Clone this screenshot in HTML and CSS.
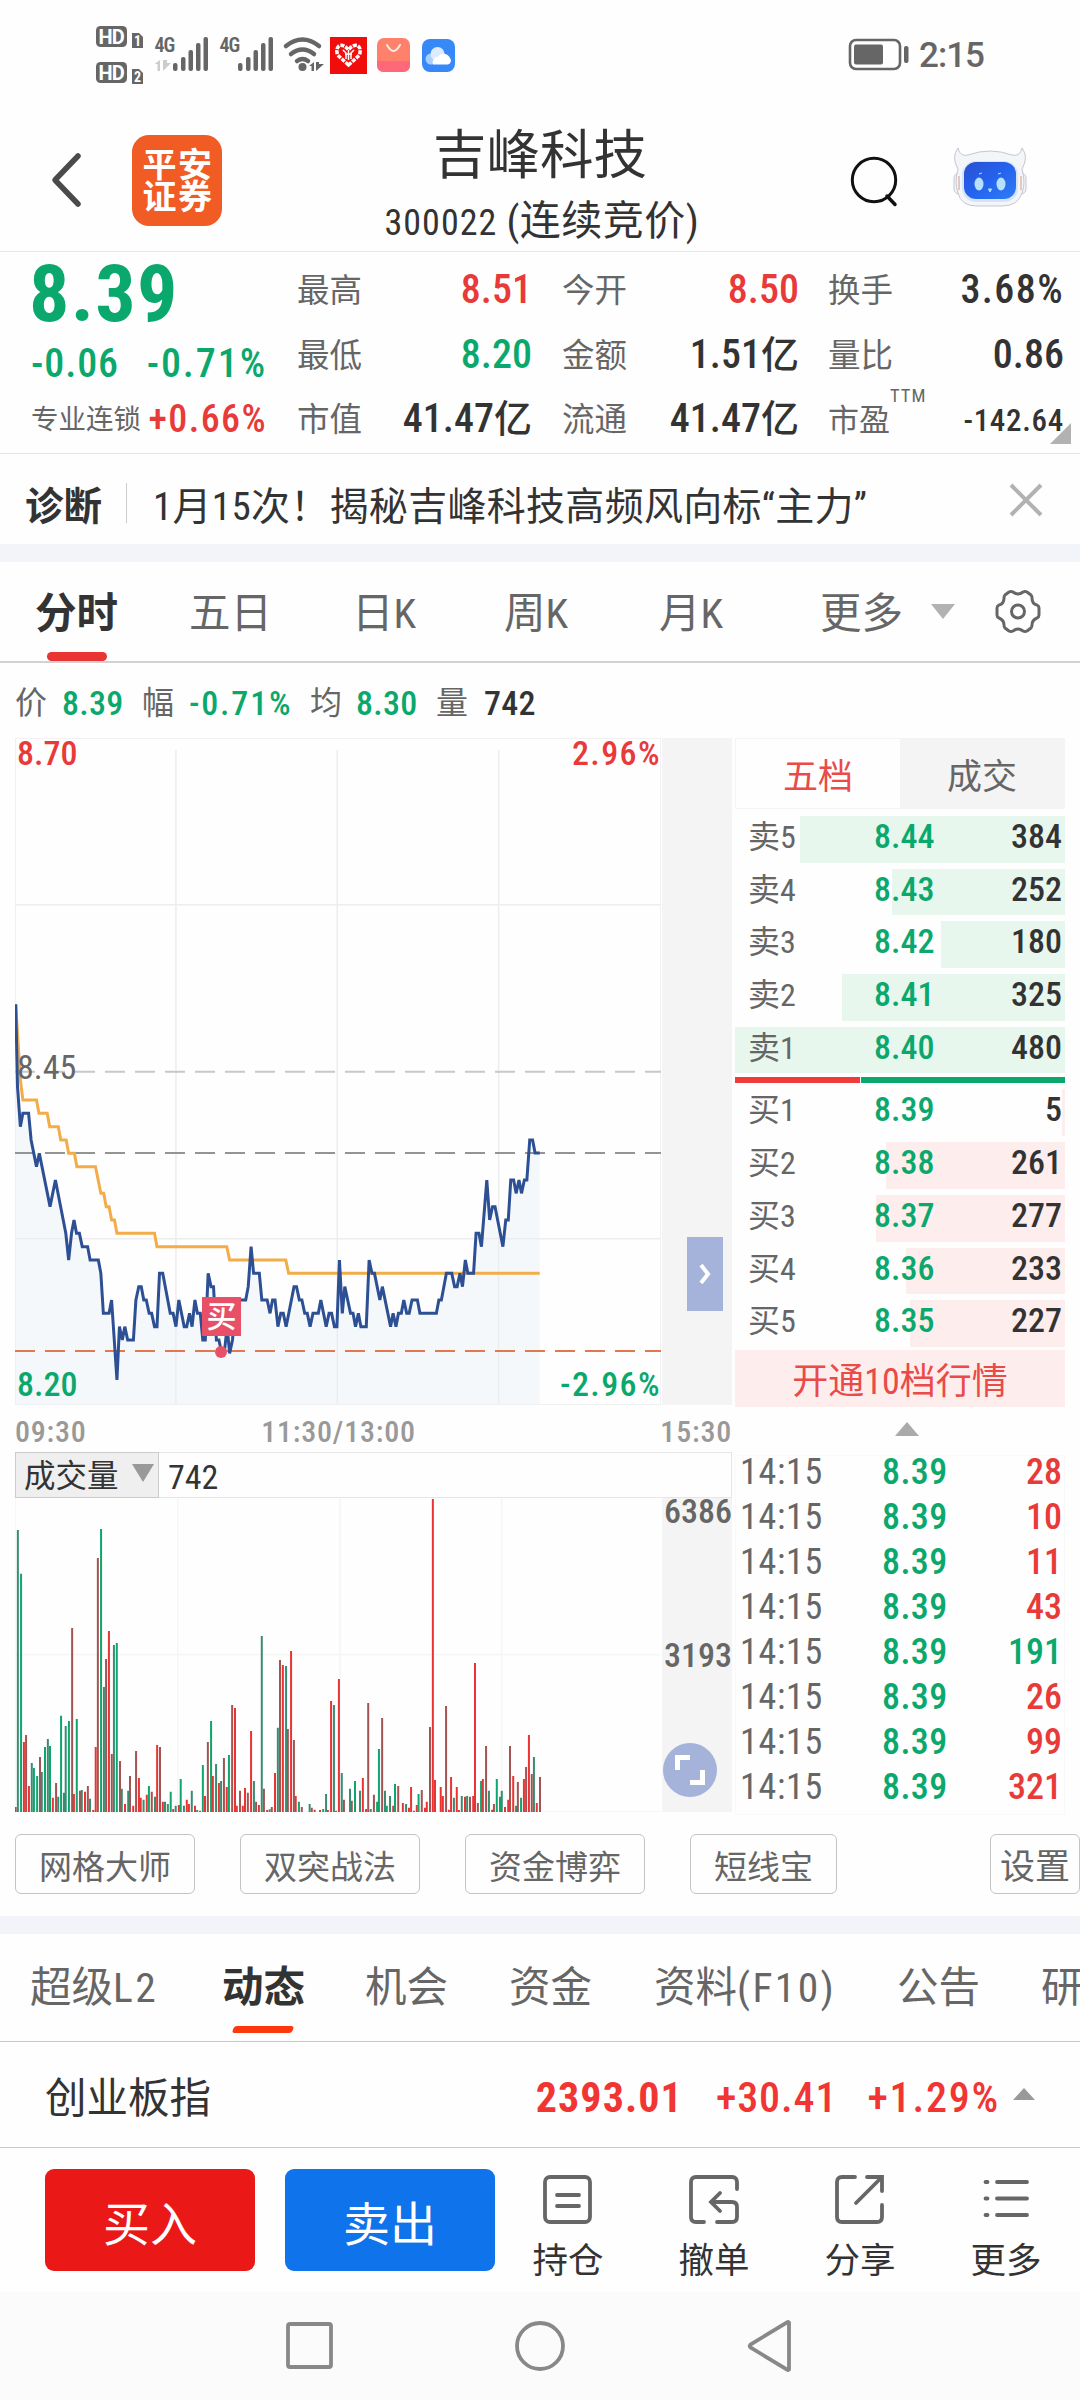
FILE: index.html
```html
<!DOCTYPE html>
<html lang="zh-CN">
<head>
    <meta charset="UTF-8">
    <meta name="viewport" content="width=device-width, initial-scale=1.0">
    <title>吉峰科技 300022</title>
    <link rel="stylesheet" href="styles.css">
</head>
<body>

<!-- 状态栏 -->
<div class="status-bar">
    <svg class="status-icons" width="362" height="64" viewBox="95 24 362 64">
        <g fill="#666">
            <rect x="96" y="26" width="31" height="21" rx="4.5"/>
            <rect x="96" y="62" width="31" height="21" rx="4.5"/>
            <path d="M132 33h7l4 4v11h-11z"/>
            <path d="M132 69h7l4 4v11h-11z"/>
            <rect x="173" y="63" width="4.5" height="8" rx="2"/>
            <rect x="181" y="57" width="4.5" height="14" rx="2"/>
            <rect x="188.5" y="50" width="4.5" height="21" rx="2"/>
            <rect x="196" y="43" width="4.5" height="28" rx="2"/>
            <rect x="203.5" y="37" width="4.5" height="34" rx="2"/>
            <rect x="238" y="63" width="4.5" height="8" rx="2"/>
            <rect x="246" y="57" width="4.5" height="14" rx="2"/>
            <rect x="253.5" y="50" width="4.5" height="21" rx="2"/>
            <rect x="261" y="43" width="4.5" height="28" rx="2"/>
            <rect x="268.5" y="37" width="4.5" height="34" rx="2"/>
            <circle cx="302.5" cy="67" r="4"/>
            <path d="M314 62v9h-2.500v-5h-2.500zM316 62v9l8-7h-5v-2z"/>
        </g>
        <path d="M160 60v11h-2.500v-7h-3zM163 60v11l8-8h-4v-3z" fill="#ccc"/>
        <g fill="none" stroke="#666" stroke-width="4.5" stroke-linecap="round">
            <path d="M286 46q16.500-13 33 0"/>
            <path d="M291 54q11.500-9 23 0"/>
            <path d="M297 61q5.500-4 11 0"/>
        </g>
        <text class="hd" x="98.5" y="43.5">HD</text>
        <text class="hd" x="98.5" y="79.5">HD</text>
        <text class="sim" x="134" y="46">1</text>
        <text class="sim" x="134" y="82">2</text>
        <text class="net" x="154.5" y="52">4G</text>
        <text class="net" x="219.5" y="52">4G</text>
        <rect x="330" y="37" width="37" height="37" fill="#f20d0d"/>
        <path d="M348.500 65l-11-10q-2-7 2-9.500 5-1 9 4.500 4-5.500 9-4.500 4 2.500 2 9.500z" fill="#f20d0d" stroke="#fff" stroke-width="3.5" stroke-dasharray="4 1.200"/>
        <path d="M343 50l3 3v6M354 50l-3 3v6M348.500 50v10M345 54h7" fill="none" stroke="#fff" stroke-width="1.5"/>
        <rect x="377" y="38" width="33" height="34" rx="7" fill="#ff816c"/>
        <path d="M377 61h33v4q0 7-7 7h-19q-7 0-7-7z" fill="#ff6878"/>
        <path d="M387 45q6.500 12 13 0" fill="none" stroke="#ffe9df" stroke-width="2" stroke-linecap="round"/>
        <rect x="422" y="39" width="33" height="33" rx="8" fill="#3889f8"/>
        <circle cx="431" cy="59" r="5.5" fill="#a9cfff"/>
        <circle cx="437.5" cy="54" r="7" fill="#dcebff"/>
        <path d="M433 64.500a6 6 0 0 1 5-8 7 7 0 0 1 12 1.500 4 4 0 0 1-2 6.500z" fill="#fff"/>
    </svg>
    <div class="status-right">
        <svg width="62" height="34" viewBox="0 0 62 34">
            <rect x="2" y="2" width="50" height="29" rx="6" fill="none" stroke="#666" stroke-width="2.6"/>
            <rect x="6" y="6.5" width="29" height="20" rx="2" fill="#666"/>
            <rect x="56" y="8" width="4.5" height="17" rx="2" fill="#666"/>
        </svg>
        <span class="clock">2:15</span>
    </div>
</div>

<!-- 标题 -->
<header class="header">
    <svg class="back" width="32" height="56" viewBox="0 0 32 56"><path d="M27 4L4 28l23 24" fill="none" stroke="#4a4a4a" stroke-width="5.5" stroke-linecap="round" stroke-linejoin="round"/></svg>
    <div class="brand"><span>平安</span><span>证券</span></div>
    <div class="name">
        <h1>吉峰科技</h1>
        <p>300022 <span>(连续竞价)</span></p>
    </div>
    <svg class="search" width="50" height="54" viewBox="0 0 50 54"><circle cx="24" cy="25" r="21.7" fill="none" stroke="#111" stroke-width="3"/><path d="M37 41l8 8.500" stroke="#111" stroke-width="3.5" stroke-linecap="round"/></svg>
    <svg class="robot" width="76" height="62" viewBox="0 0 76 62">
        <defs>
            <linearGradient id="face" x1="0" y1="0" x2="1" y2="1">
                <stop offset="0" stop-color="#2a4fd0"/><stop offset=".5" stop-color="#2463ee"/><stop offset="1" stop-color="#2f7df5"/>
            </linearGradient>
        </defs>
        <g fill="#f3f5f8" stroke="#c3c8cf" stroke-width="1">
            <rect x="2" y="27" width="12" height="21" rx="5"/>
            <rect x="62" y="27" width="12" height="21" rx="5"/>
            <path d="M6 2q2 9 10 7 22-8 44 0 8 2 10-7 7 9 0 21 4 14 0 24-4 13-20 13H25Q9 60 6 47q-4-10 0-24Q-1 11 6 2z"/>
        </g>
        <path d="M7 30v14M69 30v14" stroke="#e3b5ad" stroke-width="1.5"/>
        <rect x="10" y="15" width="56" height="41" rx="14" fill="#d5e4fa"/>
        <rect x="12" y="16" width="52" height="37" rx="12" fill="url(#face)"/>
        <ellipse cx="27" cy="38" rx="4.5" ry="6.5" fill="#b7e0fb"/>
        <ellipse cx="49" cy="38" rx="4.5" ry="6.5" fill="#b7e0fb"/>
        <path d="M27 28l3-1M46 28l3-1M36.500 43h3l-1.500 3z" stroke="#b7e0fb" stroke-width="1" fill="#b7e0fb"/>
    </svg>
</header>

<!-- 行情 -->
<section class="quote">
    <div class="quote-main">
        <div class="price green">8.39</div>
        <div class="change green"><span>-0.06</span><span class="pct">-0.71%</span></div>
        <div class="sector"><span>专业连锁</span><b class="red pct">+0.66%</b></div>
    </div>
    <dl class="stats">
        <dt>最高</dt><dd class="red">8.51</dd>
        <dt>今开</dt><dd class="red">8.50</dd>
        <dt>换手</dt><dd class="pct">3.68%</dd>
        <dt>最低</dt><dd class="green">8.20</dd>
        <dt>金额</dt><dd>1.51<i>亿</i></dd>
        <dt>量比</dt><dd>0.86</dd>
        <dt>市值</dt><dd>41.47<i>亿</i></dd>
        <dt>流通</dt><dd>41.47<i>亿</i></dd>
        <dt class="pe">市盈<sup>TTM</sup></dt><dd class="small">-142.64</dd>
    </dl>
    <div class="corner"></div>
</section>

<!-- 诊断 -->
<section class="diagnose">
    <strong>诊断</strong>
    <span class="divider"></span>
    <p>1月15次！揭秘吉峰科技高频风向标“主力”</p>
    <svg width="34" height="34" viewBox="0 0 34 34"><path d="M2 2l30 30M32 2L2 32" stroke="#b2b2b2" stroke-width="4"/></svg>
</section>

<!-- 周期 -->
<nav class="period-tabs">
    <span class="active">分时</span>
    <span>五日</span>
    <span>日K</span>
    <span>周K</span>
    <span>月K</span>
    <span>更多</span>
    <i class="tri-down"></i>
    <svg width="46" height="46" viewBox="0 0 46 46" fill="none" stroke="#666" stroke-width="3" stroke-linejoin="round">
        <path d="M18 3q5 4 10 0 2-1 4 0l4 3q1 1 1 3 0 6 5 7 2 1 2 3v7q0 2-2 3-5 2-5 7 0 2-1 3l-4 3q-2 1-4 0-5-4-10 0-2 1-4 0l-4-3q-1-1-1-3 0-5-5-7-2-1-2-3v-7q0-2 2-3 5-1 5-7 0-2 1-3l4-3q2-1 4 0z"/>
        <circle cx="23" cy="22.5" r="6.5"/>
    </svg>
</nav>

<div class="legend">
    <span>价</span><b class="green">8.39</b>
    <span>幅</span><b class="green pct">-0.71%</b>
    <span>均</span><b class="green">8.30</b>
    <span>量</span><b>742</b>
</div>

<main class="market">
    <div class="left">
        <!-- 分时图 -->
        <div class="chart">
            <svg width="646" height="667" viewBox="42 -726 1806 2001" preserveAspectRatio="none">
                <path class="area" d="M44 73 57 440 64 400H80L87 480 102 560 110 520 140 680 155 600 184 760 192 840 207 720 230 800 252 840H275L289 1000H305L327 1200 334 1040 357 1080H373L380 960 388 920H395L439 1040 446 880H455L476 1000 492 1040 500 960 515 1040 545 960 567 1080H574L582 880 597 920 605 1080 620 1120 642 1120 660 960H687L702 800 709 880H725L732 960 777 1040 800 1040 822 920 867 1040 897 960 912 1040 942 1040 949 840 957 1000 964 920 987 1000 1024 1040 1032 840 1047 880 1062 960 1069 920 1092 1040 1129 960 1152 960H1167L1174 1000H1220L1248 880H1263L1293 920 1301 840 1324 880 1331 760 1346 800 1361 600 1369 720 1377 680H1384L1406 800 1421 720 1428 600 1443 640 1473 600 1481 480H1489L1496 519H1509V1275H42z"/>
                <path class="grid" d="M42-726H1848V1275H42zM492-690V1275M943-690V1275M1394-690V1275M42-226H1848M42 776H1848"/>
                <path class="dash base" d="M42 275H1848"/>
                <path class="dash last" d="M42 519H1848"/>
                <path class="dash cost" d="M42 1113H1848"/>
                <path class="average" d="M44 73 57 300 64 360H102L109 400H132L139 440H163L170 480H185L192 520H208L215 560H267L282 640H290L297 680H305L312 720H320L327 760H432L439 800H634L642 840H799L807 880H1509"/>
                <path class="line" d="M44 73 49 320 57 440 64 400H80L87 480 102 560 110 520 140 680 155 600 184 760 192 840 200 760 207 720 214 760H222L230 800H245L252 840H275L282 880 289 1000H305L312 960 327 1200 334 1040 342 1080 349 1040 357 1080H373L380 960 388 920H395L402 960H409L417 1000H424L432 1040H439L446 880H455L476 1000H484L492 1040 500 960 515 1040H522L530 1000 537 1040 545 960 552 1000H560L567 1080H574L582 880 590 920H597L605 1080H612L620 1120H627L635 1040 642 1120 650 1080 660 960H687L694 920 702 800 709 880H725L732 960H747L755 1000 762 960H769L777 1040 785 1000H792L800 1040 822 920H829L837 960H844L852 1000H859L867 1040 875 1000H890L897 960 912 1040 920 1000H927L935 1040H942L949 840 957 1000 964 920 980 1000H987L994 1040 1002 1000 1009 1040H1024L1032 840 1040 880H1047L1062 960 1069 920 1092 1040 1099 1000 1107 1040 1114 1000H1122L1129 960 1137 1000H1144L1152 960H1167L1174 1000H1220L1227 960H1234L1248 880H1263L1271 920H1278L1286 880 1293 920 1301 840 1308 880H1324L1331 760H1339L1346 800 1361 600 1369 720 1377 680H1384L1406 800 1414 720H1421L1428 600H1436L1443 640 1451 600 1458 640 1466 600H1473L1481 480H1489L1496 519H1509"/>
            </svg>
            <div class="side"></div>
            <span class="label top-left red">8.70</span>
            <span class="label top-right red pct">2.96%</span>
            <span class="label middle">8.45</span>
            <span class="label bottom-left green">8.20</span>
            <span class="label bottom-right green pct">-2.96%</span>
            <span class="buy-dot"></span>
            <span class="buy-mark">买</span>
            <span class="handle"><svg width="14" height="20" viewBox="0 0 14 20"><path d="M3 1l7 9-7 9" fill="none" stroke="#fff" stroke-width="4"/></svg></span>
        </div>
        <div class="times"><span>09:30</span><span>11:30/13:00</span><span>15:30</span></div>

        <!-- 成交量 -->
        <div class="volume-head">
            <div class="volume-select">成交量<i class="tri-down"></i></div>
            <span>742</span>
        </div>
        <div class="volume">
            <svg width="645" height="314" viewBox="42 294 1806 942" preserveAspectRatio="none">
                <path class="grid" d="M42 294V1236H1848M498 294V1236M952 294V1236M1405 294V1236M42 764H1848"/>
                <path class="bar up" d="M67 1026V1236M81 1158V1236M148 1193V1236M207 1182V1236M238 1175V1236M261 1230V1236M268 1041V1236M305 693V1236M350 1212V1236M373 1217V1236M389 1134V1236M394 1193V1236M411 1184V1236M440 1035V1236M456 1205V1236M485 1227V1236M501 1215V1236M523 1199V1236M529 1212V1236M546 1217V1236M560 1232V1236M574 1188V1236M596 1128V1236M613 1149V1236M635 1161V1236M658 924V1236M663 1217V1236M680 1217V1236M686 1164V1236M703 993V1236M725 1215V1236M748 1230V1236M770 1119V1236M792 795V1236M815 753V1236M828 1188V1236M881 1229V1236M896 1230V1236M918 1230V1236M927 903V1236M941 1232V1236M949 837V1236M1016 1134V1236M1025 1227V1236M1101 1217V1236M1128 1209V1236M1145 1223V1236M1151 1161V1236M1159 1232V1236M1167 1215V1236M1190 1223V1236M1195 1205V1236M1212 297V1236M1218 1140V1236M1234 1161V1236M1240 1188V1236M1257 1229V1236M1263 1131V1236M1279 1161V1236M1285 1230V1236M1302 1190V1236M1325 1188V1236M1330 789V1236M1352 1137V1236M1378 1229V1236M1414 1221V1236M1423 1199V1236M1437 1128V1236M1467 1137V1236M1481 1005V1236M1503 1209V1236"/>
                <path class="bar up dim" d="M44 1221V1236M73 1005V1236M112 1071V1236M157 1149V1236M202 684V1236M224 1172V1236M246 1158V1236M274 474V1236M297 777V1236M313 1062V1236M336 1083V1236M364 1128V1236M381 1053V1236M425 1175V1236M448 1041V1236M582 1026V1236M627 1074V1236M650 915V1236M672 1172V1236M694 1178V1236M717 1205V1236M739 1166V1236M761 1221V1236M784 780V1236M806 987V1236M823 1020V1236M845 1221V1236M873 1223V1236M963 1199V1236M985 1202V1236M1031 909V1236M1047 1184V1236M1070 954V1236M1115 1158V1236M1181 1170V1236M1204 981V1236M1249 918V1236M1316 1190V1236M1338 1209V1236M1361 1038V1236M1383 1212V1236M1428 1038V1236M1450 1146V1236M1473 1101V1236M1489 1122V1236M1512 1131V1236"/>
                <path class="bar down" d="M59 521V1236M95 1104V1236M104 1128V1236M126 1041V1236M140 1038V1236M171 947V1236M193 963V1236M215 957V1236M283 387V1236M327 729V1236M417 1158V1236M478 1175V1236M506 1137V1236M568 1095V1236M591 963V1236M641 1065V1236M837 1205V1236M905 1227V1236M994 1143V1236M1056 1205V1236M1061 1047V1236M1083 1217V1236M1106 1152V1236M1172 1182V1236M1347 1143V1236M1391 1137V1236M1400 1190V1236M1459 1193V1236"/>
                <path class="bar down dim" d="M50 390V1236M89 1089V1236M117 1116V1236M134 1017V1236M163 1190V1236M179 1178V1236M184 978V1236M229 1170V1236M252 1196V1236M291 861V1236M319 735V1236M341 1166V1236M359 1172V1236M402 1199V1236M434 1190V1236M462 1205V1236M470 1212V1236M492 1217V1236M515 1217V1236M537 1172V1236M552 1230V1236M605 1092V1236M619 1143V1236M711 1143V1236M733 708V1236M755 1228V1236M778 983V1236M801 798V1236M867 1212V1236M913 1182V1236M935 915V1236M957 1119V1236M980 1166V1236M1008 1172V1236M1038 1227V1236M1078 1172V1236M1092 1188V1236M1137 1212V1236M1271 1193V1236M1293 1188V1236M1308 1188V1236M1369 1172V1236M1405 1172V1236M1445 1217V1236M1495 1071V1236"/>
            </svg>
            <div class="side"></div>
            <span class="label vol-top">6386</span>
            <span class="label vol-mid">3193</span>
            <span class="expand"><svg width="30" height="30" viewBox="0 0 30 30"><path d="M15 2.500H2.500V15M15 27.500H27.500V15" fill="none" stroke="#fff" stroke-width="5"/></svg></span>
        </div>
    </div>

    <!-- 盘口 -->
    <aside class="right">
        <div class="book-tabs"><span class="active">五档</span><span>成交</span></div>
        <div class="book ask">
            <div class="row"><i style="width:265px"></i><span>卖5</span><b>8.44</b><em>384</em></div>
            <div class="row"><i style="width:173px"></i><span>卖4</span><b>8.43</b><em>252</em></div>
            <div class="row"><i style="width:124px"></i><span>卖3</span><b>8.42</b><em>180</em></div>
            <div class="row"><i style="width:223px"></i><span>卖2</span><b>8.41</b><em>325</em></div>
            <div class="row"><i style="width:330px"></i><span>卖1</span><b>8.40</b><em>480</em></div>
        </div>
        <div class="ratio"><i></i><i></i></div>
        <div class="book bid">
            <div class="row"><i style="width:3px"></i><span>买1</span><b>8.39</b><em>5</em></div>
            <div class="row"><i style="width:179px"></i><span>买2</span><b>8.38</b><em>261</em></div>
            <div class="row"><i style="width:189px"></i><span>买3</span><b>8.37</b><em>277</em></div>
            <div class="row"><i style="width:159px"></i><span>买4</span><b>8.36</b><em>233</em></div>
            <div class="row"><i style="width:155px"></i><span>买5</span><b>8.35</b><em>227</em></div>
        </div>
        <div class="open-level">开通10档行情</div>
        <div class="fold"><i class="tri-up"></i></div>
        <div class="ticks">
            <div><span>14:15</span><b>8.39</b><em class="red">28</em></div>
            <div><span>14:15</span><b>8.39</b><em class="red">10</em></div>
            <div><span>14:15</span><b>8.39</b><em class="red">11</em></div>
            <div><span>14:15</span><b>8.39</b><em class="red">43</em></div>
            <div><span>14:15</span><b>8.39</b><em class="green">191</em></div>
            <div><span>14:15</span><b>8.39</b><em class="red">26</em></div>
            <div><span>14:15</span><b>8.39</b><em class="red">99</em></div>
            <div><span>14:15</span><b>8.39</b><em class="red">321</em></div>
        </div>
    </aside>
</main>

<div class="tools">
    <span>网格大师</span>
    <span>双突战法</span>
    <span>资金博弈</span>
    <span class="short">短线宝</span>
    <span class="setting">设置</span>
</div>

<nav class="info-tabs">
    <span>超级<i>L2</i></span>
    <span class="active">动态</span>
    <span>机会</span>
    <span>资金</span>
    <span>资料<i>(F10)</i></span>
    <span>公告</span>
    <span>研</span>
</nav>

<div class="index-row">
    <span class="index-name">创业板指</span>
    <b>2393.01</b>
    <span class="diff">+30.41</span>
    <span class="pct">+1.29%</span>
    <i class="tri-up"></i>
</div>

<!-- 底部操作 -->
<footer class="actions">
    <div class="btn buy">买入</div>
    <div class="btn sell">卖出</div>
    <div class="action">
        <svg viewBox="0 0 50 50"><rect x="2" y="2" width="45" height="45" rx="5"/><path d="M14 20h22M14 31h22" stroke-linecap="round"/></svg>
        <span>持仓</span>
    </div>
    <div class="action">
        <svg viewBox="0 0 50 50" stroke-linecap="round"><path d="M48 14V7q0-5-5-5H7Q2 2 2 7v35q0 5 5 5h8M28 47h15q5 0 5-5V32q0-5-5-5H23M31 18l-9 9 9 9"/></svg>
        <span>撤单</span>
    </div>
    <div class="action">
        <svg viewBox="0 0 50 50" stroke-linecap="round"><path d="M20 2H7Q2 2 2 7v35q0 5 5 5h35q5 0 5-5V30M32 2h15v14M46 3L21 28"/></svg>
        <span>分享</span>
    </div>
    <div class="action">
        <svg viewBox="0 0 50 50" stroke-linecap="round"><path d="M4.500 7h2M16 7h30M4.500 23.500h2M16 23.500h30M4.500 40h2M16 40h30"/></svg>
        <span>更多</span>
    </div>
</footer>

<div class="system-nav">
    <svg viewBox="0 0 56 56"><rect x="6" y="6" width="43" height="43" rx="2"/></svg>
    <svg viewBox="0 0 56 56"><circle cx="28" cy="28" r="23"/></svg>
    <svg viewBox="0 0 56 56"><path d="M47 4.500v47q-1 1-2 0L8.500 29.500q-1.500-1.500 0-3L45 4.500q1-1 2 0z"/></svg>
</div>

</body>
</html>
```
FILE: styles.css
```css
* {
    box-sizing: border-box;
    margin: 0;
    padding: 0;
}
body {
    width: 1080px;
    height: 2400px;
    overflow: hidden;
    background-color: #fefefe;
    color: #333;
    font-family: Roboto, "Noto Sans CJK SC", sans-serif;
    font-stretch: condensed;
    line-height: 1;
    white-space: nowrap;
}
svg {
    display: block;
    flex: none;
}
i, em {
    font-style: normal;
}
b {
    font-weight: 500;
}
.red {
    color: #e83a38;
}
.green {
    color: #0aa86c;
}
.pct {
    letter-spacing: 1.4px;
}

/* 三角 */
.tri-down {
    border: 12px solid transparent;
    border-top: 15px solid #b2b2b2;
    border-bottom: 0;
}
.tri-up {
    border: 12px solid transparent;
    border-bottom: 14px solid #aaa;
    border-top: 0;
}

/* 状态栏 */
.status-bar {
    display: flex;
    justify-content: space-between;
    height: 108px;
    padding: 24px 96px 0 95px;
}
.status-icons {
    overflow: visible;
}
.hd {
    font-size: 20px;
    font-weight: 700;
    font-stretch: normal;
    letter-spacing: -.8px;
    fill: #fff;
}
.sim {
    font-size: 14px;
    font-weight: 700;
    fill: #fff;
}
.net {
    font-size: 20px;
    font-weight: 600;
    letter-spacing: -1px;
    fill: #666;
}
.status-right {
    display: flex;
    align-items: center;
    gap: 9px;
    height: 62px;
}
.clock {
    margin-top: 1px;
    color: #666;
    font-size: 35px;
    font-weight: 500;
    font-stretch: normal;
    letter-spacing: -1px;
}

/* 标题 */
.header {
    display: flex;
    height: 144px;
    padding-left: 51px;
    border-bottom: 1px solid #e6e6e6;
}
.back {
    margin-top: 44px;
}
.brand {
    display: flex;
    flex-direction: column;
    align-items: center;
    justify-content: center;
    width: 90px;
    height: 91px;
    margin: 27px 0 0 49px;
    border-radius: 17px;
    background-color: #f15b24;
    color: #fff;
    font-size: 34px;
    font-weight: 700;
    line-height: 32px;
    letter-spacing: 1.5px;
    text-indent: 2px;
}
.name {
    width: 334px;
    margin: 21px -4px 0 153px;
    text-align: center;
}
.name h1 {
    margin-right: 4px;
    font-size: 53.5px;
    font-weight: 400;
}
.name p {
    margin-top: 18px;
    font-size: 36px;
    letter-spacing: 1px;
}
.name span {
    font-size: 41px;
    letter-spacing: .5px;
}
.search {
    margin: 47px 0 0 145px;
}
.robot {
    margin: 38px 0 0 52px;
}

/* 行情 */
.quote {
    position: relative;
    display: flex;
    height: 202px;
    border-bottom: 1px solid #e6e6e6;
}
.quote-main {
    width: 297px;
    padding-left: 31px;
}
.price {
    margin: 2px 0 0 -2px;
    font-size: 80px;
    font-weight: 700;
    letter-spacing: 1.3px;
}
.change {
    display: flex;
    justify-content: space-between;
    width: 236px;
    margin-top: 10px;
    font-size: 40px;
    font-weight: 500;
}
.change span {
    letter-spacing: .9px;
}
.change .pct {
    letter-spacing: 1.9px;
}
.sector {
    display: flex;
    align-items: center;
    justify-content: space-between;
    width: 236px;
    margin-top: 16px;
    color: #666;
    font-size: 27.5px;
}
.sector span {
    margin-top: 2px;
}
.sector b {
    font-size: 38px;
}
.stats {
    display: grid;
    grid-template-columns: 70px 165px 30px 70px 167px 29px 70px 166px;
    grid-template-rows: repeat(3, 64.5px);
    align-items: center;
    padding-top: 6px;
}
.stats dt {
    margin-top: 2px;
    color: #666;
    font-size: 32.5px;
}
.stats dd {
    color: #333;
    font-size: 40px;
    font-weight: 500;
    text-align: right;
}
.stats dd.red {
    color: #e83a38;
}
.stats dd.green {
    color: #0aa86c;
}
.stats dd:nth-of-type(3n+2) {
    grid-column: 5;
}
.stats dt:nth-of-type(3n+2) {
    grid-column: 4;
}
.stats dt:nth-of-type(3n) {
    grid-column: 7;
}
.stats dd:nth-of-type(3n) {
    grid-column: 8;
}
.stats dd i {
    font-size: 38px;
}
.stats dd.small {
    padding-top: 3px;
    font-size: 31px;
    letter-spacing: .7px;
}
.pe {
    position: relative;
}
.stats dt.pe {
    font-size: 31px;
}
.pe sup {
    position: absolute;
    left: 62px;
    top: -18px;
    font-size: 18.5px;
    line-height: 1;
    letter-spacing: 1px;
}
.corner {
    position: absolute;
    right: 9px;
    bottom: 9px;
    border-left: 21px solid transparent;
    border-bottom: 21px solid #b2b2b2;
}

/* 诊断 */
.diagnose {
    display: flex;
    align-items: center;
    height: 108px;
    padding: 0 37px 2px 25px;
    border-bottom: 18px solid #f3f4f9;
}
.diagnose strong {
    margin-top: 19px;
    font-size: 38.5px;
}
.divider {
    width: 1px;
    height: 40px;
    margin: 10px 26px 0 24px;
    background-color: #ccc;
}
.diagnose p {
    flex: 1;
    margin-top: 19px;
    font-size: 39px;
    letter-spacing: .3px;
}
.diagnose svg {
    margin-top: 3px;
}

/* 周期 */
.period-tabs {
    display: grid;
    grid-template-columns: 154px 163px 152px 155px 161px 111px 64px 60px;
    align-items: center;
    height: 101px;
    padding-left: 35px;
    border-bottom: 2px solid #d2d2d2;
    color: #666;
    font-size: 41.5px;
}
.period-tabs span {
    margin-top: 5px;
}
.period-tabs .active {
    position: relative;
    color: #333;
    font-weight: 700;
}
.period-tabs .active::after {
    content: "";
    position: absolute;
    left: 12px;
    bottom: -26px;
    width: 60px;
    height: 9px;
    border-radius: 5px;
    background-color: #e83433;
}
.period-tabs .tri-down {
    justify-self: start;
}

.legend {
    display: grid;
    grid-template-columns: 47px 80px 47px 121px 46px 80px 48px auto;
    align-items: center;
    height: 75px;
    padding: 4px 0 0 15px;
    color: #666;
    font-size: 32px;
}
.legend span {
    margin-top: 1px;
}
.legend b {
    font-size: 34px;
    letter-spacing: .3px;
}
.legend .pct {
    letter-spacing: 1.8px;
}
.legend b:last-child {
    color: #333;
}

/* 图表 */
.market {
    display: flex;
    gap: 3px;
    height: 1075px;
    padding-left: 15px;
}
.left {
    width: 717px;
}
.chart, .volume {
    position: relative;
    display: flex;
    justify-content: space-between;
}
.side {
    width: 70px;
    background-color: #f4f4f4;
}
.chart path, .volume path {
    fill: none;
    vector-effect: non-scaling-stroke;
}
.chart .area {
    fill: #f5f8fb;
}
.chart .grid, .volume .grid {
    stroke: #ededf0;
    stroke-width: 1.5;
}
.volume .grid {
    stroke: #f5f5f5;
}
.dash {
    stroke-width: 2;
    stroke-dasharray: 20 10;
}
.base {
    stroke: #c8c8c8;
}
.last {
    stroke: #949494;
}
.cost {
    stroke: #e07850;
}
.chart .handle path {
    fill: none;
}
.average {
    stroke: #f2ac48;
    stroke-width: 3;
}
.line {
    stroke: #2d4f94;
    stroke-width: 3;
}
.bar {
    stroke-width: 2;
}
.up {
    stroke: #ea3434;
}
.up.dim {
    stroke: #a45353;
}
.down {
    stroke: #0ea66e;
}
.down.dim {
    stroke: #3a8c70;
}
.label {
    position: absolute;
    color: #666;
    font-size: 34px;
    font-weight: 500;
}
.label.red {
    color: #e83a38;
}
.label.green {
    color: #0aa86c;
}
.top-left {
    left: 2px;
    top: -2px;
}
.top-right {
    right: 71px;
    top: -2px;
}
.middle {
    left: 2px;
    top: 312px;
    font-weight: 400;
}
.bottom-left {
    left: 2px;
    bottom: 4px;
}
.bottom-right {
    right: 71px;
    bottom: 4px;
}
.buy-mark {
    position: absolute;
    left: 187px;
    top: 559px;
    width: 39px;
    height: 39px;
    background-color: #e85068;
    color: #fff;
    font-size: 30px;
    font-weight: 500;
    line-height: 39px;
    text-align: center;
}
.buy-dot {
    position: absolute;
    left: 200px;
    top: 608px;
    width: 12px;
    height: 12px;
    border-radius: 50%;
    background-color: #e85068;
}
.handle {
    position: absolute;
    right: 9px;
    top: 499px;
    display: flex;
    align-items: center;
    justify-content: center;
    width: 36px;
    height: 74px;
    background-color: #a5b3db;
}
.times {
    display: flex;
    justify-content: space-between;
    height: 47px;
    padding: 12px 0 0 0;
    color: #999;
    font-size: 30px;
    font-weight: 500;
    letter-spacing: .8px;
}
.times span:nth-child(2) {
    margin-right: 70px;
}
.volume-head {
    display: flex;
    align-items: center;
    gap: 9px;
    height: 46px;
    border: 1px solid #e6e6e6;
    border-left: 0;
    font-size: 34px;
}
.volume-head span {
    margin-top: 3px;
}
.volume-select {
    display: flex;
    align-items: center;
    gap: 13px;
    width: 144px;
    height: 46px;
    padding: 3px 0 0 8px;
    border: 1px solid #ccc;
    background-color: #efefef;
    font-size: 31.5px;
}
.volume-select .tri-down {
    margin-bottom: 8px;
    border-width: 18px 11px 0;
    border-top-color: #999;
}
.vol-top {
    right: 0;
    top: -4px;
}
.vol-mid {
    right: 0;
    top: 140px;
}
.expand {
    position: absolute;
    right: 15px;
    bottom: 15px;
    display: flex;
    align-items: center;
    justify-content: center;
    width: 54px;
    height: 54px;
    border-radius: 50%;
    background-color: #a5b3db;
}

/* 盘口 */
.right {
    width: 330px;
}
.book-tabs {
    display: flex;
    height: 71px;
    border: 1px solid #f4f4f4;
    font-size: 35px;
    line-height: 77px;
    text-align: center;
}
.book-tabs span {
    width: 50%;
    background-color: #f4f4f4;
    color: #666;
}
.book-tabs .active {
    background-color: #fefefe;
    color: #ea4a48;
}
.book {
    display: grid;
    grid-template-columns: 330px;
    gap: 6px;
}
.ask {
    margin-top: 7px;
}
.bid {
    margin-top: 6px;
}
.row {
    position: relative;
    display: grid;
    grid-template-columns: 126px 70px 118px;
    height: 46.7px;
    padding: 3px 3px 0 13px;
    font-size: 34px;
}
.row i {
    position: absolute;
    top: 0;
    right: 0;
    height: 100%;
    background-color: #e8f7ee;
}
.bid .row i {
    background-color: #fdeeed;
}
.row span, .row b, .row em {
    position: relative;
}
.row span {
    color: #666;
    font-size: 32px;
    line-height: 36px;
}
.row b, .ticks b {
    color: #0aa86c;
}
.row em {
    font-weight: 500;
    text-align: right;
}
.ratio {
    display: flex;
    gap: 1px;
    height: 6px;
    margin-top: 4px;
}
.ratio i {
    width: 125px;
    background-color: #ef3b3a;
}
.ratio i + i {
    flex: 1;
    background-color: #0aa86c;
}
.open-level {
    height: 57px;
    margin-top: 3px;
    background-color: #fdeeed;
    color: #ea4a48;
    font-size: 36px;
    line-height: 65px;
    text-align: center;
}
.fold {
    display: flex;
    align-items: flex-start;
    justify-content: center;
    height: 48px;
    padding: 15px 0 0 14px;
}
.ticks {
    height: 360px;
    border: 1px solid #f9f9f9;
    font-size: 36px;
}
.ticks div {
    display: grid;
    grid-template-columns: 142px 70px 110px;
    height: 45px;
    padding-left: 4px;
    line-height: 32px;
}
.ticks span {
    color: #666;
    letter-spacing: .7px;
}
.ticks b {
    letter-spacing: .4px;
}
.ticks em {
    font-weight: 500;
    text-align: right;
}

/* 工具 */
.tools {
    display: flex;
    gap: 45px;
    height: 121px;
    padding: 21px 0 0 15px;
    border-bottom: 18px solid #f3f4f9;
    color: #666;
    font-size: 33px;
    line-height: 65px;
    text-align: center;
}
.tools span {
    flex: none;
    width: 180px;
    height: 60px;
    border: 1px solid #c4c4c4;
    border-radius: 6px;
}
.tools .short {
    width: 147px;
}
.tools .setting {
    width: 90px;
    margin-left: auto;
    font-size: 35px;
}

/* 资讯 */
.info-tabs {
    display: grid;
    grid-template-columns: 192px 143px 144px 145px 243px 144px 80px;
    height: 108px;
    padding: 33px 0 0 30px;
    border-bottom: 1.5px solid #c8c8c8;
    color: #666;
    font-size: 41.5px;
    overflow: hidden;
}
.info-tabs i {
    letter-spacing: 2.4px;
}
.info-tabs .active {
    position: relative;
    color: #333;
    font-weight: 700;
}
.info-tabs .active::after {
    content: "";
    position: absolute;
    left: 11px;
    top: 59px;
    width: 60px;
    height: 7px;
    border-radius: 3px;
    background-color: #ff380c;
    transform: skewX(-20deg);
}
.index-row {
    display: flex;
    align-items: center;
    height: 106px;
    padding: 6px 45px 0 45px;
    border-bottom: 1px solid #c8c8c8;
    color: #f03533;
    font-size: 42px;
    font-weight: 500;
}
.index-row b {
    margin-right: 33px;
    font-weight: 700;
    letter-spacing: 1.1px;
}
.index-row .diff {
    letter-spacing: .9px;
}
.index-row .pct {
    margin-left: 30px;
    letter-spacing: 1.8px;
}
.index-row .index-name {
    margin: 3px auto 0 0;
    color: #333;
    font-size: 41.5px;
    font-weight: 400;
}
.index-row .tri-up {
    margin: -8px 0 0 13px;
    border-width: 0 11px 12px;
    border-bottom-color: #999;
}

/* 底部 */
.actions {
    display: flex;
    height: 144px;
    padding: 21px 0 0 45px;
}
.btn {
    width: 210px;
    height: 102px;
    margin-right: 30px;
    border-radius: 9px;
    color: #fff;
    font-size: 47px;
    line-height: 111px;
    text-align: center;
}
.buy {
    background-color: #ea1918;
}
.sell {
    margin-right: 0;
    background-color: #0f73ec;
}
.action {
    display: flex;
    flex-direction: column;
    align-items: center;
    width: 146px;
    padding-top: 6px;
    font-size: 35.5px;
}
.action svg {
    width: 50px;
    height: 50px;
    margin-bottom: 19px;
    fill: none;
    stroke: #666;
    stroke-width: 3.8;
}
.system-nav {
    display: flex;
    gap: 174px;
    height: 109px;
    padding: 26px 0 0 282px;
    background-color: #fbfbfb;
}
.system-nav svg {
    width: 56px;
    height: 56px;
    fill: none;
    stroke: #888;
    stroke-width: 3.8;
}
```
